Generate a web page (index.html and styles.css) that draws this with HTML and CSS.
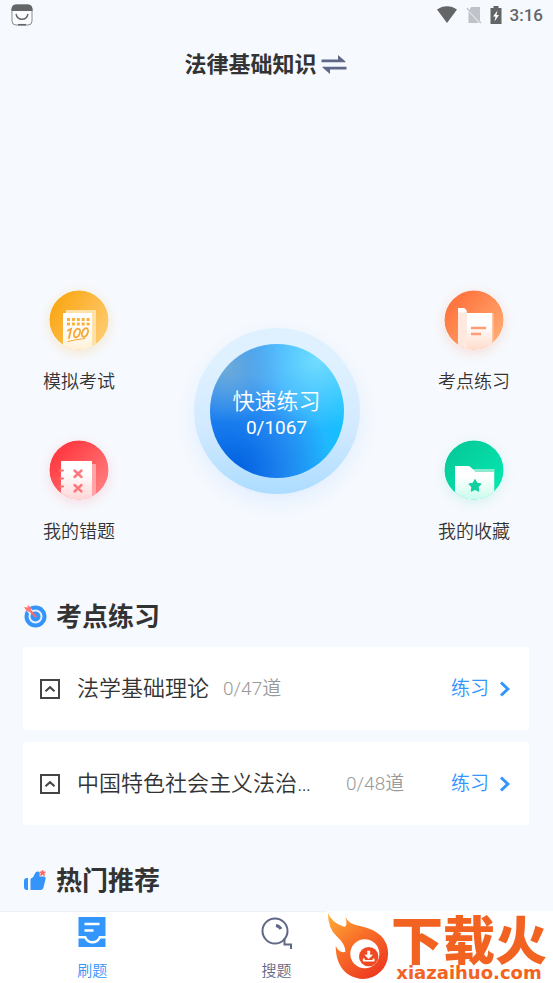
FILE: index.html
```
<!DOCTYPE html>
<html lang="zh-CN">
<head>
<meta charset="utf-8">
<meta name="viewport" content="width=device-width, initial-scale=1">
<title>法律基础知识</title>
<link rel="stylesheet" href="styles.css">
</head>
<body>
<div class="status">
  <svg width="22" height="22" viewBox="0 0 22 22" aria-hidden="true">
    <rect x="1" y="1" width="20" height="20" rx="4" fill="#fbfcfe" stroke="#8b8c8f"/>
    <path d="M.5 7V5a4.500 4.500 0 0 1 4.500-4.500h12A4.500 4.500 0 0 1 21.500 5v2z" fill="#646567"/>
    <path d="M5 10c1.500 7 10.500 7 12 0" fill="none" stroke="#646567" stroke-width="1.400"/>
    <path d="M7 20.700h8" stroke="#646567" stroke-width="1.500"/>
  </svg>
  <div class="status-right">
    <svg width="22" height="20" viewBox="0 0 22 20" aria-hidden="true"><path d="M1 4.500C7 0 15 0 21 4.500L11 18z" fill="#646567"/></svg>
    <svg width="16" height="20" viewBox="0 0 16 20" aria-hidden="true"><path d="M5 2h9v14.500L3.500 5zM2.500 6.500 13 18H2.500z" fill="#bfc2c8"/><path d="M.8 3 15 18" stroke="#bfc2c8" stroke-width="1.300"/></svg>
    <svg width="12" height="20" viewBox="0 0 12 20" aria-hidden="true"><path d="M3.500 1h5v2h3v16H.5V3h3z" fill="#646567"/><path d="M7.500 5.500 3 11.500h2.500L4.500 16.500 9 10H6.500z" fill="#fff"/></svg>
    <span class="clock">3:16</span>
  </div>
</div>
<header class="top">
  <button class="subject" type="button">
    <span>法律基础知识</span>
    <svg width="26" height="20" viewBox="0 0 26 20" aria-hidden="true"><path d="M.5 4.500H17V0L24.500 6.500v.8H.5zM25.500 14.500H9V19L1.500 12.500v-.8h24z" fill="#5f6887"/></svg>
  </button>
</header>
<main>
  <section class="hero">
    <div class="side">
      <a class="tile" href="#exam">
        <svg class="disc amber" viewBox="0 0 60 60" aria-hidden="true">
          <defs>
            <linearGradient id="ga" x1="0" y1="0.200" x2="1" y2="0.800"><stop offset="0" stop-color="#faa40f"/><stop offset="1" stop-color="#ffcd74"/></linearGradient>
            <linearGradient id="pa" x1="0" y1="0" x2="0" y2="1"><stop offset="0.300" stop-color="#fff"/><stop offset="1" stop-color="#fff1d8"/></linearGradient>
            <clipPath id="disc"><circle cx="30" cy="30" r="29.500"/></clipPath>
          </defs>
          <g clip-path="url(#disc)">
            <path fill="url(#ga)" d="M0 0h60v60H0z"/>
            <path fill="#ffe2a9" d="M17 20h30v40H17z"/>
            <path fill="url(#pa)" d="M14 23h29v37H14z"/>
            <path d="M18 29.500h23M18 34h23" stroke="#f9b13b" stroke-width="3" stroke-dasharray="3 1.900"/>
            <g fill="none" stroke="#f5a634" stroke-width="1.800" stroke-linecap="round"><path d="M19 40.500l3-1.500-2 9"/><ellipse cx="28" cy="43" rx="2.700" ry="4.500" transform="rotate(24 28 43)"/><ellipse cx="36" cy="42.500" rx="2.700" ry="4.500" transform="rotate(24 36 42.500)"/><path stroke-width="1" d="M19 51.500q7-2 17-3"/></g>
          </g>
        </svg>
        <span>模拟考试</span>
      </a>
      <a class="tile" href="#mistakes">
        <svg class="disc red" viewBox="0 0 60 60" aria-hidden="true">
          <defs>
            <linearGradient id="gr" x1="0" y1="0" x2="1" y2="1"><stop offset="0.200" stop-color="#ff3c43"/><stop offset="1" stop-color="#ff8b8b"/></linearGradient>
            <linearGradient id="pr" x1="0" y1="0" x2="0" y2="1"><stop offset="0.300" stop-color="#fff"/><stop offset="1" stop-color="#ffd5d5"/></linearGradient>
          </defs>
          <g clip-path="url(#disc)">
            <path fill="url(#gr)" d="M0 0h60v60H0z"/>
            <path fill="#ffa5a6" d="M40 24h7v36h-7z"/>
            <path fill="url(#pr)" d="M12 21h31v39H12z"/>
            <path d="M11 30.500h3M11 38.500h3M11 46.500h3" stroke="#ff6c70" stroke-width="2" stroke-linecap="round"/>
            <path d="M25.500 30.500l7 6.500m0-6.500-7 6.500M25.500 45l7 6.500m0-6.500-7 6.500" stroke="#ff777b" stroke-width="2.400" stroke-linecap="round"/>
          </g>
        </svg>
        <span>我的错题</span>
      </a>
    </div>
    <button class="start" type="button">
      <span class="start-core">
        <span class="start-name">快速练习</span>
        <span class="start-count">0/1067</span>
      </span>
    </button>
    <div class="side">
      <a class="tile" href="#points">
        <svg class="disc orange" viewBox="0 0 60 60" aria-hidden="true">
          <defs>
            <linearGradient id="go" x1="0" y1="0" x2="1" y2="1"><stop offset="0.200" stop-color="#ff7640"/><stop offset="1" stop-color="#ffb67c"/></linearGradient>
            <linearGradient id="po" x1="0" y1="0" x2="0" y2="1"><stop offset="0.300" stop-color="#fff"/><stop offset="1" stop-color="#ffdcca"/></linearGradient>
          </defs>
          <g clip-path="url(#disc)">
            <path fill="url(#go)" d="M0 0h60v60H0z"/>
            <path fill="#ffc5a4" d="M47 23h2.500v37H47z"/>
            <path fill="url(#po)" d="M20 23h28v37H20z"/>
            <path fill="#ffe9df" d="M14 18h4q5 0 5 5v37h-9z"/>
            <path d="M14 18h4q4.500 0 4.500 4.500H14z" fill="#fff"/>
            <path d="M27 38h15M27 44h10" stroke="#ff9c73" stroke-width="2.500"/>
          </g>
        </svg>
        <span>考点练习</span>
      </a>
      <a class="tile" href="#favorites">
        <svg class="disc green" viewBox="0 0 60 60" aria-hidden="true">
          <defs>
            <linearGradient id="gg" x1="0" y1="0" x2="1" y2="1"><stop offset="0.200" stop-color="#06cc9b"/><stop offset="1" stop-color="#05edb4"/></linearGradient>
            <linearGradient id="pg" x1="0" y1="0" x2="0" y2="1"><stop offset="0.300" stop-color="#fff"/><stop offset="1" stop-color="#c9fcec"/></linearGradient>
          </defs>
          <g clip-path="url(#disc)">
            <path fill="url(#gg)" d="M0 0h60v60H0z"/>
            <path fill="#8cebcf" d="M28 29h22.500v31H28z"/>
            <path fill="url(#pg)" d="M11 26h13q2 0 3.500 2l4 4H50v28H11z"/>
            <path d="M31 39.500l2 3.700 4.200.8-3 3 .6 4.300-3.800-1.900-3.800 1.900.6-4.300-3-3 4.200-.8z" fill="#12cf9f" stroke="#12cf9f" stroke-linejoin="round"/>
          </g>
        </svg>
        <span>我的收藏</span>
      </a>
    </div>
  </section>

  <section class="block">
    <h2>
      <svg width="24" height="24" viewBox="0 0 24 24" aria-hidden="true"><circle cx="12.500" cy="11.500" r="11" fill="#3594fa"/><circle cx="12.500" cy="11.500" r="6" fill="none" stroke="#e4f2ff" stroke-width="2"/><path d="M4 3l4 4" stroke="#f6f9fe" stroke-width="5"/><path d="M5.500 4l7 7.500" stroke="#ff6865" stroke-width="2.200" stroke-linecap="round"/><path d="M1 2l3.500.500L5 0l3 3v4L4 6.500z" fill="#ff7774"/></svg>
      考点练习
    </h2>
    <ul class="cards">
      <li class="card">
        <svg class="fold" viewBox="0 0 20 20" aria-hidden="true"><path d="M1 1h18v18H1z" /><path d="M5.500 12.200l4.500-4 4.500 4"/></svg>
        <span class="card-name">法学基础理论</span>
        <span class="card-count">0/47道</span>
        <a class="go" href="#c1">练习<svg width="12" height="18" viewBox="0 0 12 18" aria-hidden="true"><path d="M2 2.500 8.800 9 2 15.500"/></svg></a>
      </li>
      <li class="card">
        <svg class="fold" viewBox="0 0 20 20" aria-hidden="true"><path d="M1 1h18v18H1z" /><path d="M5.500 12.200l4.500-4 4.500 4"/></svg>
        <span class="card-name">中国特色社会主义法治理论</span>
        <span class="card-count">0/48道</span>
        <a class="go" href="#c2">练习<svg width="12" height="18" viewBox="0 0 12 18" aria-hidden="true"><path d="M2 2.500 8.800 9 2 15.500"/></svg></a>
      </li>
    </ul>
  </section>

  <section class="block hot">
    <h2>
      <svg width="24" height="24" viewBox="0 0 24 24" aria-hidden="true"><path d="M4 9h1v12H4q-3 0-3-3v-6q0-3 3-3zM7.500 10Q11 8 12 4.500 13 2 15 2.500q2.500.5 1.500 5h4.500q2 0 1.500 2.500l-2 8.500q-.7 2.500-3 2.500h-10z" fill="#3594fa"/><path d="M19.500 1l.9 1.800 2.100.2-1.500 1.500.5 2.200-2-1.100-2 1.100.5-2.200L16.500 3l2.100-.2z" fill="#ff6865" stroke="#ff6865" stroke-width=".7"/></svg>
      热门推荐
    </h2>
  </section>
</main>

<nav class="tabs">
  <a class="tab active" href="#practice">
    <svg width="32" height="32" viewBox="0 0 32 32" aria-hidden="true"><path d="M2.500 0h27v19H23q-1.500 5-6.500 5T10 19H2.500zM2.500 21.500h6q2.500 5 8 5t8-5h5V30h-27z" fill="#3296fc"/><path d="M8.500 7h15M8.500 13.500h9" stroke="#fff" stroke-width="2.400"/></svg>
    <span>刷题</span>
  </a>
  <a class="tab" href="#search">
    <svg width="32" height="32" viewBox="0 0 32 32" fill="none" stroke="#5f6887" stroke-width="2" aria-hidden="true"><circle cx="15" cy="14" r="12.500"/><path d="M24.500 21v6.500H31V32"/><path d="M16 8.500q3.500.6 5 3.500" stroke-width="3"/></svg>
    <span>搜题</span>
  </a>
  <a class="tab" href="#mine" aria-label="我的"></a>
  <div class="brand">
    <svg class="brand-flame" viewBox="0 0 66 70" aria-hidden="true">
      <defs><linearGradient id="fl" x1="0" y1="0" x2="0.700" y2="1"><stop offset="0" stop-color="#ffb13a"/><stop offset="0.450" stop-color="#f97429"/><stop offset="1" stop-color="#ee3b20"/></linearGradient></defs>
      <path d="M1 1Q5 11 17 15q5 1 2-10 3 7 14 9 30 6 30 29a26 26 0 0 1-26 26C20 68 9 56 9 35q4 8 10 6 0-8-9-16Q1 17 1 1z" fill="url(#fl)"/>
      <circle cx="39" cy="43" r="15" fill="#fff"/><circle cx="43" cy="46" r="10" fill="#f04a23"/>
      <path d="M41.500 40h3v4h3L43 48.500 38.500 44h3zM37 48v3h12v-3h-2v1.500h-8V48z" fill="#fff"/>
    </svg>
    <div class="brand-text">
      <span class="brand-name">下载火</span>
      <span class="brand-url">xiazaihuo.com</span>
    </div>
  </div>
</nav>
</body>
</html>
```
FILE: styles.css
```
* { box-sizing: border-box; }

body {
  margin: 0;
  min-height: 100vh;
  display: flex;
  flex-direction: column;
  background: #f6f9fe;
  color: #333;
  font-family: Roboto, "Noto Sans CJK SC", sans-serif;
}

a { color: inherit; text-decoration: none; }

button {
  border: 0;
  padding: 0;
  background: none;
  color: inherit;
  font: inherit;
  cursor: pointer;
}

svg { display: block; flex: none; }

.status {
  display: flex;
  align-items: center;
  justify-content: space-between;
  height: 30px;
  padding: 0 10px 0 11px;
}

.status-right { display: flex; align-items: center; gap: 8px; }

.clock {
  font-size: 17px;
  line-height: 20px;
  font-weight: 500;
  color: #646567;
}

.top {
  display: flex;
  justify-content: center;
  align-items: center;
  height: 70px;
  padding-right: 22px;
}

.subject {
  display: flex;
  align-items: center;
  gap: 4px;
  font-size: 22px;
  line-height: 32px;
  font-weight: 700;
}

main { flex: 1; padding-bottom: 12px; }

.hero {
  display: flex;
  justify-content: space-between;
  align-items: flex-start;
  padding: 190px 43px 0;
}

.side { display: flex; flex-direction: column; gap: 46px; }

.tile {
  display: flex;
  flex-direction: column;
  align-items: center;
  gap: 20px;
  font-size: 18px;
  line-height: 24px;
  font-weight: 350;
}

.disc { width: 60px; height: 60px; border-radius: 50%; }
.amber { box-shadow: 0 3px 12px #faa40f33; }
.red { box-shadow: 0 3px 12px #ff3c4326; }
.orange { box-shadow: 0 3px 12px #ff764033; }
.green { box-shadow: 0 3px 12px #06cc9b22; }

.start {
  width: 166px;
  height: 166px;
  margin-top: 38px;
  padding: 16px;
  border-radius: 50%;
  background: linear-gradient(#dff1ff 20%, #d2eaff 60%, #acdcff);
  box-shadow: 0 8px 20px #3d9dff1c;
}

.start-core {
  display: flex;
  flex-direction: column;
  align-items: center;
  justify-content: center;
  height: 100%;
  padding-top: 3px;
  border-radius: 50%;
  color: #fff;
  background:
    radial-gradient(circle at 12% 18%, #6eaad8 0, #5fa8e000 34%),
    radial-gradient(circle at 80% 12%, #72dcff 0, #50c8ff00 44%),
    radial-gradient(circle at 18% 95%, #0060e0 0, #0a70f000 58%),
    linear-gradient(90deg, #2c92fb, #3da5fc 50%, #14c1ff);
}

.start-name { font-size: 22px; line-height: 30px; font-weight: 350; }
.start-count { font-size: 19px; line-height: 22px; }

.block { padding: 55px 24px 0 23px; }
.hot { padding-top: 38px; }

h2 {
  display: flex;
  align-items: center;
  gap: 9px;
  margin: 0;
  font-size: 26px;
  line-height: 36px;
  font-weight: 700;
}

.cards {
  display: flex;
  flex-direction: column;
  gap: 12px;
  margin: 12px 0 0;
  padding: 0;
  list-style: none;
}

.card {
  display: flex;
  align-items: center;
  height: 83px;
  padding: 0 18px 0 17px;
  border-radius: 3px;
  background: #fff;
}

.fold {
  width: 20px;
  height: 20px;
  margin-right: 17px;
  fill: none;
  stroke: #444;
  stroke-width: 2;
}

.card-name {
  max-width: 255px;
  margin-right: 14px;
  overflow: hidden;
  white-space: nowrap;
  text-overflow: ellipsis;
  font-size: 22px;
  line-height: 32px;
  font-weight: 350;
}

.card-count {
  flex: none;
  font-size: 19px;
  line-height: 28px;
  font-weight: 350;
  color: #999;
}

.go {
  display: flex;
  align-items: center;
  gap: 10px;
  flex: none;
  margin-left: auto;
  font-size: 19px;
  line-height: 28px;
  font-weight: 350;
  color: #3296fc;
}

.go svg { fill: none; stroke: #3296fc; stroke-width: 3; }

.tabs {
  position: sticky;
  bottom: 0;
  display: flex;
  height: 73px;
  border-top: 1px solid #eff1f5;
  background: #fff;
}

.tab {
  flex: 1;
  display: flex;
  flex-direction: column;
  align-items: center;
  gap: 12px;
  padding-top: 5px;
  font-size: 15px;
  line-height: 20px;
  font-weight: 350;
  color: #5f6887;
}

.active { color: #3296fc; }

/* Site badge laid over the last tab */
.brand {
  position: absolute;
  right: 0;
  bottom: 0;
  display: flex;
  width: 226px;
  height: 73px;
  background: #fff;
  color: #f26322;
}

.brand-flame { width: 64px; height: 70px; }
.brand-text { display: flex; flex-direction: column; align-items: center; }

.brand-name {
  font-family: "Noto Sans CJK SC", sans-serif;
  font-size: 52px;
  line-height: 54px;
  font-weight: 900;
  white-space: nowrap;
}

.brand-url {
  font-family: "DejaVu Sans", sans-serif;
  font-size: 18px;
  line-height: 16px;
  font-weight: 700;
}
```
